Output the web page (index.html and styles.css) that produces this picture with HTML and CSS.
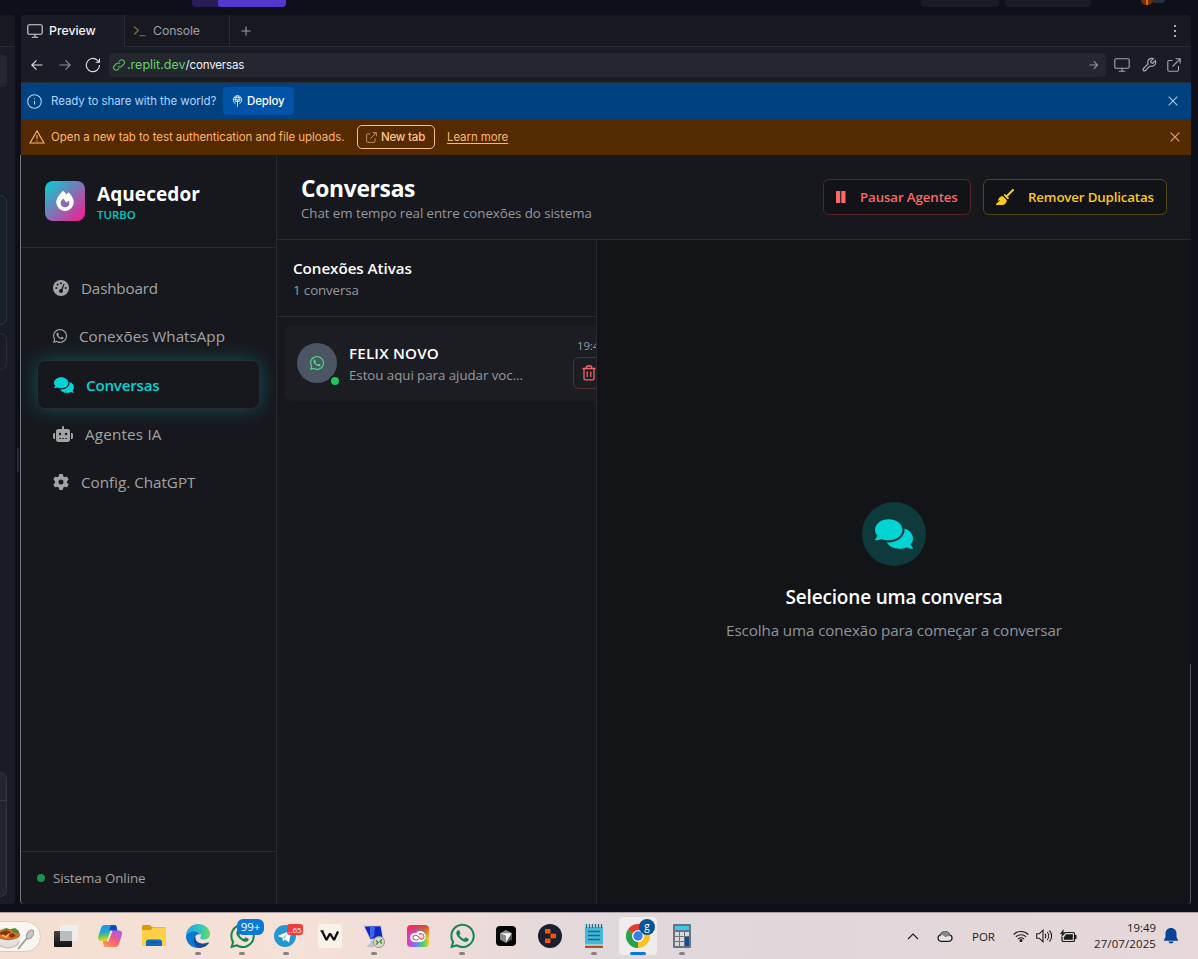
FILE: index.html
```
<!DOCTYPE html>
<html lang="pt-BR">
<head>
<meta charset="utf-8">
<title>Conversas</title>
<link rel="stylesheet" href="styles.css">
</head>
<body>
<svg class="defs" width="0" height="0" aria-hidden="true">
  <defs>
    <symbol id="comments" viewBox="0 0 576 512"><path d="M416 192c0-88.4-93.1-160-208-160S0 103.6 0 192c0 34.3 14.1 65.9 38 92-13.4 30.2-35.5 54.2-35.8 54.5-2.2 2.3-2.8 5.7-1.5 8.7S4.8 352 8 352c36.6 0 66.9-12.3 88.7-25 32.2 15.7 70.3 25 111.3 25 114.9 0 208-71.6 208-160zm122 220c23.9-26 38-57.7 38-92 0-66.9-53.5-124.2-129.3-148.1.9 6.6 1.3 13.3 1.3 20.1 0 105.9-107.7 192-240 192-10.8 0-21.3-.8-31.7-1.9C207.8 439.6 281.8 480 368 480c41 0 79.1-9.2 111.3-25 21.8 12.7 52.1 25 88.7 25 3.2 0 6.1-1.9 7.3-4.8 1.3-2.9.7-6.3-1.5-8.7-.3-.2-22.4-24.2-35.8-54.5z"/></symbol>
    <symbol id="whatsapp" viewBox="0 0 448 512"><path d="M380.9 97.1C339 55.1 283.2 32 223.9 32c-122.4 0-222 99.6-222 222 0 39.1 10.2 77.3 29.6 111L0 480l117.7-30.9c32.4 17.7 68.9 27 106.1 27h.1c122.3 0 224.1-99.6 224.1-222 0-59.3-25.2-115-67.1-157zm-157 341.6c-33.2 0-65.7-8.9-94-25.7l-6.7-4-69.8 18.3L72 359.2l-4.4-7c-18.5-29.4-28.2-63.3-28.2-98.2 0-101.7 82.8-184.5 184.6-184.5 49.3 0 95.6 19.2 130.4 54.1 34.8 34.9 56.2 81.2 56.1 130.5 0 101.8-84.9 184.6-186.6 184.6zm101.2-138.2c-5.5-2.8-32.8-16.2-37.9-18-5.1-1.9-8.8-2.8-12.5 2.8-3.7 5.6-14.3 18-17.6 21.8-3.2 3.7-6.5 4.2-12 1.4-32.6-16.3-54-29.1-75.5-66-5.7-9.8 5.7-9.1 16.3-30.3 1.8-3.7.9-6.9-.5-9.7-1.4-2.8-12.5-30.1-17.1-41.2-4.5-10.8-9.1-9.3-12.5-9.5-3.2-.2-6.9-.2-10.6-.2-3.7 0-9.7 1.4-14.8 6.9-5.1 5.6-19.4 19-19.4 46.3 0 27.3 19.9 53.7 22.6 57.4 2.8 3.7 39.1 59.7 94.8 83.8 35.2 15.2 49 16.5 66.6 13.9 10.7-1.6 32.8-13.4 37.4-26.4 4.6-13 4.6-24.1 3.2-26.4-1.3-2.5-5-3.9-10.5-6.6z"/></symbol>
    <symbol id="monitor" viewBox="0 0 16 14"><path d="M2.2.8h11.6c.8 0 1.4.6 1.4 1.4v6.6c0 .8-.6 1.4-1.4 1.4H2.200c-.8 0-1.400-.6-1.400-1.400V2.200C.8 1.400 1.400.8 2.200.8zM8 10.200v3M4.800 13.200h6.400"/></symbol>
    <symbol id="external" viewBox="0 0 14 14"><path d="M5.500 2.500H2c-.7 0-1.200.5-1.200 1.200V12c0 .7.5 1.200 1.200 1.200h8.300c.7 0 1.200-.5 1.200-1.200V8M8.500.8h4.700v4.700M13.200.8 5.500 8.500"/></symbol>
    <symbol id="close" viewBox="0 0 10 10"><path d="m.7.7 8.600 8.600m0-8.600L.7 9.300"/></symbol>
  </defs>
</svg>

<div class="desktop">
  <div class="topbar">
    <div class="usage"><span></span></div>
    <div class="top-pill first"></div>
    <div class="top-pill second"></div>
    <div class="avatars"><i class="avatar-a"></i><i class="avatar-b"></i></div>
  </div>

  <div class="workspace">
    <div class="rail">
      <div class="rail-head"></div>
      <div class="rail-chip"></div>
      <div class="rail-card tall"></div>
      <div class="rail-card short"></div>
      <div class="rail-input"><i></i></div>
    </div>
    <div class="splitter"><i></i></div>

    <div class="pane">
      <div class="tabs">
        <div class="tab active"><svg class="line" width="16" height="14"><use href="#monitor"/></svg><span class="t-preview">Preview</span></div>
        <div class="tab console"><svg class="line prompt" width="13" height="12" viewBox="0 0 13 12"><path d="m1 1.500 4.500 4L1 9.500M6.500 10.700h6"/></svg><span class="t-console">Console</span></div>
        <svg class="line plus" width="10" height="10" viewBox="0 0 10 10"><path d="M5 .5v9M.5 5h9"/></svg>
        <div class="kebab"><i></i><i></i><i></i></div>
      </div>

      <div class="address">
        <svg class="line" width="12" height="12" viewBox="0 0 12 12"><path d="M11.500 6H1m4.500-4.700L.8 6l4.700 4.700"/></svg>
        <svg class="line dim" width="12" height="12" viewBox="0 0 12 12"><path d="M.5 6H11M6.500 1.300 11.200 6l-4.700 4.700"/></svg>
        <svg class="line reload" width="16" height="16" viewBox="0 0 16 16"><path d="M14.500 8A6.600 6.600 0 1 1 12.300 3.100l2 1.900M14.500 1.500v3.800h-3.800"/></svg>
        <div class="url">
          <svg class="line link" width="12" height="12" viewBox="0 0 12 12"><path d="M5 7.200a2.500 2.500 0 0 0 3.600.1l2-2A2.500 2.500 0 0 0 7 1.600l-1.100 1.100M7 4.800a2.500 2.500 0 0 0-3.600-.1l-2 2A2.500 2.500 0 0 0 5 10.400l1.100-1.100"/></svg>
          <span class="host">.replit.dev</span><span class="path">/conversas</span>
          <svg class="line go" width="9" height="10" viewBox="0 0 9 10"><path d="M.5 5h8M4.800 1.200 8.500 5 4.800 8.800"/></svg>
        </div>
        <div class="tools">
          <svg class="line" width="16" height="14"><use href="#monitor"/></svg>
          <svg class="line wrench" width="16" height="16" viewBox="0 0 24 24"><path d="M14.700 6.300a1 1 0 0 0 0 1.400l1.600 1.600a1 1 0 0 0 1.400 0l3.800-3.800a6 6 0 0 1-7.900 7.900l-6.900 6.900a2.100 2.100 0 0 1-3-3l6.900-6.900a6 6 0 0 1 7.900-7.900z"/></svg>
          <svg class="line" width="14" height="14"><use href="#external"/></svg>
        </div>
      </div>

      <div class="notice share">
        <svg class="line" width="15" height="15" viewBox="0 0 15 15"><circle cx="7.500" cy="7.500" r="6.800"/><path d="M7.500 7v3.500M7.500 4.300v1"/></svg>
        <span class="t-share">Ready to share with the world?</span>
        <div class="deploy"><svg class="line" width="11" height="12" viewBox="0 0 11 12"><path d="M3.500 8.600A4.200 4.200 0 1 1 7.500 8.600M1.300 4.800h8.400M2 2.700h7M5.500.6C3.500 2 3.300 5 4 7M5.500.6C7.500 2 7.700 5 7 7M5.500 5.500v6.300M4 7.200 5.500 5.500 7 7.200"/></svg><span>Deploy</span></div>
        <svg class="line x" width="10" height="10"><use href="#close"/></svg>
      </div>
      <div class="notice warn">
        <svg class="line" width="16" height="14" viewBox="0 0 16 14"><path d="M8 .9 15 13H1zM8 5v4M8 10.300v1.100"/></svg>
        <span class="t-open">Open a new tab to test authentication and file uploads.</span>
        <div class="newtab"><svg class="line" width="11" height="11"><use href="#external"/></svg><span>New tab</span></div>
        <span class="learn">Learn more</span>
        <svg class="line x" width="10" height="10"><use href="#close"/></svg>
      </div>

      <div class="app">
        <aside class="sidebar">
          <div class="brand">
            <div class="logo"><svg width="18" height="20" viewBox="0 0 448 512"><path fill="#fff" d="M159.300 5.400c7.800-7.300 19.900-7.200 27.700 .1c27.600 25.900 53.500 53.800 77.700 84c11-14.400 23.500-30.100 37-42.900c7.900-7.400 20.100-7.400 28 .1c34.600 33 63.900 76.600 84.500 118c20.300 40.800 33.800 82.500 33.800 111.900C448 404.200 348.200 512 224 512C98.400 512 0 404.100 0 276.500c0-38.400 17.800-85.300 45.400-131.700C73.300 97.700 112.700 48.600 159.300 5.400zM225.700 416c25.300 0 47.700-7 68.800-21c42.100-29.400 53.400-88.200 28.100-134.400c-4.500-9-16-9.600-22.500-2l-25.200 29.300c-6.600 7.600-18.500 7.400-24.700-.5c-16.500-21-46-58.500-62.800-79.800c-6.300-8-18.300-8.100-24.700-.1c-33.800 42.500-50.800 69.300-50.800 99.400C112 375.400 162.600 416 225.700 416z"/></svg></div>
            <div class="brand-text"><strong>Aquecedor</strong><small>TURBO</small></div>
          </div>
          <nav>
            <a class="item"><svg width="16" height="16" viewBox="0 0 16 16"><circle cx="8" cy="8" r="8"/><g fill="#17181d"><circle cx="3.300" cy="8" r="1.050"/><circle cx="4.700" cy="4.600" r="1.050"/><circle cx="8" cy="3.200" r="1.050"/><circle cx="12.700" cy="8" r="1.050"/><circle cx="8" cy="11.100" r="2"/><path d="m7.600 10.700 3-7 1 .4-2.600 7.200z"/></g></svg><span class="n1">Dashboard</span></a>
            <a class="item"><svg width="14" height="16"><use href="#whatsapp"/></svg><span class="n2">Conexões WhatsApp</span></a>
            <a class="item current"><svg width="20" height="18"><use href="#comments"/></svg><span class="n3">Conversas</span></a>
            <a class="item"><svg width="20" height="16" viewBox="0 0 640 512"><path d="M320 0c17.700 0 32 14.300 32 32V96H472c39.800 0 72 32.200 72 72V440c0 39.800-32.200 72-72 72H168c-39.800 0-72-32.200-72-72V168c0-39.800 32.200-72 72-72H288V32c0-17.700 14.300-32 32-32zM208 384c-8.800 0-16 7.200-16 16s7.200 16 16 16h32c8.800 0 16-7.200 16-16s-7.200-16-16-16H208zm96 0c-8.800 0-16 7.200-16 16s7.200 16 16 16h32c8.800 0 16-7.200 16-16s-7.200-16-16-16H304zm96 0c-8.800 0-16 7.200-16 16s7.200 16 16 16h32c8.800 0 16-7.200 16-16s-7.200-16-16-16H400zM264 256a40 40 0 1 0-80 0 40 40 0 1 0 80 0zm152 40a40 40 0 1 0 0-80 40 40 0 1 0 0 80zM48 224H64V416H48c-26.500 0-48-21.500-48-48V272c0-26.500 21.500-48 48-48zm544 0c26.500 0 48 21.500 48 48v96c0 26.500-21.500 48-48 48H576V224h16z"/></svg><span class="n4">Agentes IA</span></a>
            <a class="item"><svg width="16" height="16" viewBox="0 0 512 512"><path d="M495.900 166.600c3.200 8.700 .5 18.400-6.400 24.600l-43.300 39.400c1.100 8.300 1.700 16.800 1.700 25.400s-.6 17.100-1.700 25.400l43.300 39.400c6.900 6.200 9.600 15.900 6.400 24.600c-4.400 11.900-9.700 23.300-15.800 34.300l-4.700 8.100c-6.600 11-14 21.400-22.100 31.200c-5.900 7.200-15.700 9.600-24.500 6.800l-55.700-17.700c-13.400 10.300-28.200 18.900-44 25.400l-12.500 57.100c-2 9.100-9 16.300-18.200 17.800c-13.800 2.300-28 3.500-42.500 3.500s-28.700-1.200-42.500-3.500c-9.200-1.500-16.200-8.700-18.200-17.800l-12.500-57.100c-15.800-6.500-30.600-15.100-44-25.400L83.100 425.900c-8.800 2.800-18.600 .3-24.500-6.800c-8.100-9.800-15.500-20.200-22.100-31.200l-4.700-8.100c-6.100-11-11.400-22.400-15.800-34.300c-3.200-8.700-.5-18.400 6.400-24.600l43.300-39.400C64.600 273.100 64 264.600 64 256s.6-17.100 1.700-25.400L22.400 191.200c-6.900-6.200-9.600-15.900-6.400-24.600c4.400-11.900 9.700-23.300 15.800-34.300l4.700-8.100c6.600-11 14-21.400 22.100-31.200c5.900-7.200 15.700-9.600 24.500-6.800l55.700 17.700c13.400-10.300 28.200-18.900 44-25.400l12.500-57.100c2-9.100 9-16.300 18.200-17.800C227.300 1.200 241.500 0 256 0s28.700 1.200 42.500 3.500c9.200 1.500 16.200 8.700 18.200 17.800l12.500 57.100c15.800 6.500 30.600 15.100 44 25.400l55.700-17.700c8.800-2.800 18.600-.3 24.500 6.800c8.100 9.800 15.500 20.200 22.100 31.200l4.700 8.100c6.100 11 11.400 22.400 15.800 34.300zM256 336a80 80 0 1 0 0-160 80 80 0 1 0 0 160z"/></svg><span class="n5">Config. ChatGPT</span></a>
          </nav>
          <div class="status"><i></i><span>Sistema Online</span></div>
        </aside>

        <main>
          <header class="page-head">
            <div class="titles"><h1>Conversas</h1><p>Chat em tempo real entre conexões do sistema</p></div>
            <div class="btn red"><svg width="10" height="12" viewBox="0 0 10 12"><rect width="4.200" height="12" rx=".6"/><rect x="5.300" width="4.200" height="12" rx=".6"/></svg><span>Pausar Agentes</span></div>
            <div class="btn yellow"><svg width="18" height="16" viewBox="0 0 576 512"><path d="M566.600 54.600c12.500-12.500 12.500-32.800 0-45.300s-32.800-12.500-45.300 0l-192 192-34.700-34.700c-4.200-4.200-10-6.600-16-6.600c-12.500 0-22.600 10.100-22.600 22.600v29.100L364.300 320h29.100c12.500 0 22.600-10.100 22.600-22.600c0-6-2.400-11.800-6.600-16l-34.700-34.700 192-192zM341.100 353.400L222.600 234.900c-42.700-3.700-85.200 11.700-115.800 42.300l-8 8C76.500 307.500 64 337.700 64 369.200c0 6.800 7.100 11.200 13.200 8.200l51.100-25.500c5-2.500 9.500 4.100 5.400 7.900L7.300 473.400C2.700 477.600 0 483.600 0 489.900C0 502.100 9.900 512 22.100 512l173.300 0c38.800 0 75.900-15.400 103.400-42.800c30.600-30.600 45.900-73.100 42.300-115.800z"/></svg><span>Remover Duplicatas</span></div>
          </header>
          <div class="columns">
            <section class="list">
              <div class="list-head"><h2>Conexões Ativas</h2><p>1 conversa</p></div>
              <div class="row">
                <div class="face"><svg width="14" height="16"><use href="#whatsapp"/></svg><i></i></div>
                <div class="who"><strong>FELIX NOVO</strong><p>Estou aqui para ajudar voc...</p></div>
                <div class="meta"><time>19:49</time><div class="trash"><svg class="line" width="14" height="16" viewBox="0 0 14 16"><path d="M.5 3.500h13M4.300 3.300V2c0-.6.4-1 1-1h3.400c.6 0 1 .4 1 1v1.300M2 3.800v9.700c0 .8.600 1.400 1.400 1.400h7.200c.8 0 1.400-.6 1.400-1.400V3.800M5.300 6.500v5.500M8.700 6.500v5.500"/></svg></div></div>
              </div>
            </section>
            <section class="empty">
              <div class="orb"><svg width="38" height="34"><use href="#comments"/></svg></div>
              <h3>Selecione uma conversa</h3>
              <p>Escolha uma conexão para começar a conversar</p>
            </section>
          </div>
        </main>
      </div>
    </div>
  </div>

  <div class="taskbar">
    <div class="search">
      <svg width="36" height="24" viewBox="0 0 36 24"><ellipse cx="8" cy="16" rx="11.500" ry="6.500" fill="#c9c5c1"/><path d="M-4 9c0 8 5 12 12 12s12-4 12-12z" fill="#e5e1dd"/><ellipse cx="8" cy="8.500" rx="12" ry="5.800" fill="#b96a3f"/><ellipse cx="8" cy="8.500" rx="10.500" ry="4.700" fill="#dd7226"/><path d="m-1 7 7-3 5 2-7 5zM8 9l5-2 3 3-5 2z" fill="#8f2d11"/><path d="m11 3 4-1 4 3-2 3-4-2zM3 3l4-1 2 2-4 1z" fill="#4f8a34"/><path d="m2 9 4 2 3-3" stroke="#f2c55a" stroke-width="1.500" fill="none"/><path d="m18 23 9-11" stroke="#9b9b9c" stroke-width="1.800"/><ellipse cx="30" cy="8.500" rx="3" ry="5" transform="rotate(32 30 8.500)" fill="#c5c6c8" stroke="#8e8e90"/></svg>
    </div>
    <div class="slot"><svg width="24" height="24" viewBox="0 0 24 24"><defs><linearGradient id="dk" x2="0" y2="1"><stop stop-color="#444"/><stop offset="1" stop-color="#101010"/></linearGradient></defs><rect x="0" y="7" width="18" height="16" rx="1" fill="url(#dk)"/><rect x="6" y="1" width="18" height="16" rx="1" fill="#eee"/><path d="M6 7h12v10H6z" fill="#bcbcbc"/></svg></div>
    <div class="slot"><svg width="24" height="22" viewBox="0 0 24 22"><defs><linearGradient id="c1" x2=".2" y2="1"><stop stop-color="#1793ee"/><stop offset=".5" stop-color="#23a8cc"/><stop offset=".75" stop-color="#7dc74a"/><stop offset="1" stop-color="#f1cf22"/></linearGradient><linearGradient id="c2" x2=".2" y2="1" x1=".8"><stop stop-color="#a25cf5"/><stop offset=".5" stop-color="#f4587c"/><stop offset="1" stop-color="#ff9659"/></linearGradient></defs><path d="M6.500 0h10c1.500 0 2 1 2.500 3h-3c-1.500 0-2.500.7-3 2.200L10 14c-.5 1.500-1.200 2-2.700 2H3c-2.500 0-3.400-2-2.700-4.500L3 3c.6-2 1.800-3 3.500-3z" fill="url(#c1)"/><path d="M13 .1h3.500C18 0 18.600 1 19.500 6H13.200L11 5z" fill="#1648c6"/><path d="M17.500 22h-10C6 22 5.500 21 5 16h3c1.500 0 2.500-.7 3-2.200L13.200 8c.5-1.500 1.300-2.500 2.800-2.500h5c2.500 0 3.400 2 2.700 5L21 19c-.6 2-1.800 3-3.500 3z" fill="url(#c2)"/><path d="M12.500 5.500h2L10.500 16.500H9z" fill="#f4e1d8"/></svg></div>
    <div class="slot"><svg width="24" height="22" viewBox="0 0 24 22"><path d="M0 1.500C0 .7.700 0 1.500 0h6C9 0 9 2 10.500 2H22c1 0 2 .7 2 1.700V8H0z" fill="#dc9a0b"/><path d="M0 6.500V5h8.500L11 2.500h11.500c.8 0 1.500.7 1.500 1.500v17H0z" fill="#ffd045"/><path d="M4 21v-4c0-1.500 1-2.500 2.500-2.500h11c1.500 0 2.500 1 2.500 2.500v4z" fill="#0b6dc2"/><path d="M8 17.500h8" stroke="#074f96"/></svg></div>
    <div class="slot run"><svg width="24" height="24" viewBox="0 0 24 24"><defs><linearGradient id="e1"><stop stop-color="#1fa5e3"/><stop offset=".6" stop-color="#34c5c1"/><stop offset="1" stop-color="#67dd55"/></linearGradient></defs><path d="M0 12C0 5 5.500 0 12 0c7 0 12 4.500 12 9.500 0 4-3 6-6 6-3.500 0-4.500-1.200-3.300-2.700C16 11 14 8 9.500 8 5 8 1 10 0 12z" fill="url(#e1)"/><path d="M0 12c2-5 12-6.500 14.500-1.500C11 9.500 8.500 12 9.500 15c1 4 6 6.500 12.500 3.600C20 22 16.500 24 12 24 5 24 0 18.500 0 12z" fill="#0a78d0"/><path d="M9.300 12.500c-1 4.500 4.700 9.500 12.900 6.100.8-.2 1 .3.500 1-2 2.700-5.500 4.400-9 4.400C8 22.500 6 16 9.300 12.500z" fill="#154b91"/></svg></div>
    <div class="slot run"><svg class="wa" width="25" height="28"><use href="#whatsapp"/></svg><b class="badge blue">99+</b></div>
    <div class="slot run"><svg width="24" height="24" viewBox="0 0 24 24"><circle cx="11" cy="12" r="11" fill="#2497d0"/><path d="m3.500 12 14-6-2.500 12.500-4-3-2 2-.5-3.700z" fill="#fff"/><path d="m8.500 13.800 6-5.300-4.200 6.500z" fill="#a9cfe4"/></svg><b class="badge red">..65</b></div>
    <div class="slot"><svg width="24" height="24" viewBox="0 0 24 24"><rect width="24" height="24" rx="2" fill="#f8f2e9"/><path d="m4 7 4.500 9 3.500-6.500 4 6.500 4-8.500" fill="none" stroke="#111" stroke-width="2.300" stroke-linejoin="bevel"/><path d="M2.500 7h3" stroke="#111" stroke-width="1.500"/></svg></div>
    <div class="slot run"><svg width="24" height="24" viewBox="0 0 24 24"><path d="m1 1.500 19-.5 2 13-14 2.500z" fill="#d2d5db"/><path d="m2.500 2.500 16-.3 2 11L8.500 15z" fill="#1727bd"/><path d="m8 2.500 5-.1-1 10-4 2z" fill="#3e63ee"/><path d="m9 17 5-1v4l-3 3.500-7-1 4-3z" fill="#bfc3ca"/><circle cx="17" cy="18" r="5.500" fill="#d9d9d3" stroke="#949493"/><path d="m14 16.500 2 2-2 2m6-5-2 2 2 2" fill="none" stroke="#3e8a2d" stroke-width="1.400"/></svg></div>
    <div class="slot"><div class="cc"><svg width="17" height="13" viewBox="0 0 17 13"><path d="M5 12a4.500 4.500 0 1 1 .8-8.800A5.500 5.500 0 1 1 11 12z" fill="#fff"/><path d="M8.500 9.200C7 10.500 3 10.500 3 7.700 3 5 6.500 4.500 8 6.300l2 2.200c2 1.500 4-.2 4-2 0-2.500-3-3.800-5-2" fill="none" stroke="#f2405f" stroke-width="1.100"/></svg></div></div>
    <div class="slot run"><svg class="wa" width="25" height="28"><use href="#whatsapp"/></svg></div>
    <div class="slot"><svg width="20" height="20" viewBox="0 0 20 20"><rect width="20" height="20" rx="4" fill="#050505"/><path d="m4 7.200 6-3.200 6 3.200L10 10z" fill="#8d8d8d"/><path d="M16 7.200 10 17v-7L4 7.200z" fill="#f4f4f4"/><path d="M4 7.200 10 10v7l-6-3.500z" fill="#8a8a8a"/><path d="M16 7.200v6.300L10 17z" fill="#555"/></svg></div>
    <div class="slot"><svg width="24" height="24" viewBox="0 0 24 24"><circle cx="12" cy="12" r="12" fill="#172130"/><path d="M7 5h5.500v4.500H7zM12.500 9.700H18v4.600h-5.500zM7 14.500h5.500V19H7z" fill="#f9560b"/></svg></div>
    <div class="slot run"><svg width="18" height="24" viewBox="0 0 18 24"><path d="M0 21h18v3H0z" fill="#b5521a"/><path d="M0 3h18v18.500H0z" fill="#45b8d8"/><path d="M1.500 0v4m3-4v4m3-4v4m3-4v4m3-4v4m3-4v4" stroke="#19738f" stroke-width="1.300"/><path d="M3 7.500h12M3 11.500h12M3 15.500h12" stroke="#146b86" stroke-width="1.300"/><path d="M0 20.500h18v1H0z" fill="#f2eee8"/></svg></div>
    <div class="slot chrome"><svg width="24" height="24" viewBox="0 0 24 24"><path d="M12 12 1.600 6A12 12 0 0 1 22.400 6z" fill="#e33b2e"/><path d="M12 12 22.400 6A12 12 0 0 1 12 24z" fill="#fcc31e"/><path d="M12 12v12A12 12 0 0 1 1.600 6z" fill="#2c9f4b"/><path d="M12 6.200h10.500A12 12 0 0 1 24 12l-7 3z" fill="#fcc31e"/><path d="M1.600 6 7 15l5 3.500L9 23.600z" fill="#2c9f4b"/><circle cx="12" cy="12" r="6" fill="#fff"/><circle cx="12" cy="12" r="4.700" fill="#397ee8"/></svg><b class="badge user">g</b></div>
    <div class="slot run"><svg width="18" height="24" viewBox="0 0 18 24"><rect width="18" height="24" rx="1" fill="#69747f"/><path d="M2 2h14v4H2z" fill="#39c9ee"/><path d="M2 8h4v4H2zm5 0h4v4H7zm5 0h4v4h-4zM2 13h4v4H2zm5 0h4v4H7zM2 18h4v4H2zm5 0h4v4H7z" fill="#d5d9dc"/><path d="M12 13h4v9h-4z" fill="#0b4c98"/></svg></div>
    <div class="tray">
      <svg class="line chev" width="12" height="7" viewBox="0 0 12 7"><path d="m1 6 5-5 5 5"/></svg>
      <svg class="cloud" width="16" height="12" viewBox="0 0 16 12"><path d="M4 11.300a3.300 3.300 0 0 1-.4-6.500 4.700 4.700 0 0 1 8.900 0A3.300 3.300 0 0 1 12 11.300z" fill="#e9e5e6" stroke="#1c1c1c" stroke-width="1.200"/><path d="M2 5.800C4 4.500 6 5 8.500 7.200L13 5.500C11 0 5 0 3.600 4.800z" fill="#898788"/></svg>
      <span class="lang">POR</span>
      <svg class="line wifi" width="16" height="12" viewBox="0 0 16 12"><path d="M.7 4.500a10.300 10.300 0 0 1 14.600 0M2.800 6.900a7.300 7.300 0 0 1 10.400 0M5 9.100a4.300 4.300 0 0 1 6 0"/><circle cx="8" cy="10.500" r="1" fill="#1c1c1c"/></svg>
      <svg class="line vol" width="17" height="14" viewBox="0 0 17 14"><path d="M.7 4.800h2.500L7 1.200v11.600L3.200 9.200H.7zM9 4.800c1 1.300 1 3.100 0 4.400M11.200 3c2 2.300 2 5.700 0 8M13.400 1.300c3 3.300 3 8.100 0 11.400"/></svg>
      <svg class="bat" width="17" height="14" viewBox="0 0 17 14"><path d="M4.500 3.500h8.700c.8 0 1.300.5 1.300 1.300v6.400c0 .8-.5 1.300-1.300 1.300H3.300c-.8 0-1.300-.5-1.300-1.300V8" fill="none" stroke="#1c1c1c" stroke-width="1.200"/><path d="M6 5.200h6.800v5.600H3.800V8.500zM15 6h1.500v4H15zM3.500 0 0 5h2L1 8.500 6 3.500H3.500z" fill="#1c1c1c"/></svg>
      <div class="clock"><span class="hm">19:49</span><span class="dt">27/07/2025</span></div>
      <svg class="bell" width="14" height="16" viewBox="0 0 14 16"><path d="M7 0c3.200 0 5.500 2.400 5.500 5.500V9L14 12v.7H0V12l1.500-3V5.500C1.500 2.400 3.800 0 7 0zM4.500 13.500h5A2.500 2 0 0 1 4.500 13.500z" fill="#074496"/></svg>
    </div>
  </div>
</div>
</body>
</html>
```
FILE: styles.css
```
* { box-sizing: border-box; }
body { margin: 0; width: 1198px; height: 959px; overflow: hidden; background: #0e0f18; font-family: "Open Sans", "Noto Sans", sans-serif; }
h1, h2, h3, p { margin: 0; }
svg { display: block; flex: none; fill: currentColor; }
.defs { position: absolute; }
.line { fill: none; stroke: currentColor; stroke-width: 1.100; }
span, time, strong, small { white-space: nowrap; }
.desktop { display: flex; flex-direction: column; height: 959px; }

/* top strip */
.topbar { height: 15px; flex: none; display: flex; align-items: flex-start; padding-left: 192px; }
.usage { width: 94px; height: 7px; background: #291d58; border-radius: 0 0 4px 4px; overflow: hidden; }
.usage span { display: block; margin-left: 26px; height: 7px; background: #5438ce; border-radius: 0 0 0 3px; }
.top-pill { height: 7px; background: #1a1c25; border-radius: 0 0 4px 4px; }
.top-pill.first { margin-left: 635px; width: 78px; }
.top-pill.second { margin-left: 6px; width: 86px; }
.avatars { margin-left: 50px; display: flex; }
.avatar-a { width: 12px; height: 5px; background: linear-gradient(90deg, #6b3200 5px, #ff5a10 5px, #ff5a10 7px, #6b3200 7px); border-radius: 0 0 7px 7px; }
.avatar-b { width: 12px; height: 3px; background: #2b2e3b; border-radius: 0 0 9px 3px; }

/* workspace */
.workspace { height: 889px; flex: none; display: flex; }
.rail { width: 15px; background: #1a1c25; border-radius: 0 4px 4px 0; overflow: hidden; }
.rail-head { height: 32px; background: #181920; border-bottom: 1px solid #292b36; }
.rail-chip { margin-top: 8px; width: 7px; height: 32px; background: #252730; border-radius: 0 4px 4px 0; }
.rail-card { width: 7px; border: 1px solid #2a2c38; border-left: 0; border-radius: 0 7px 7px 0; }
.rail-card.tall { margin-top: 108px; height: 130px; border-color: #27343a; background: #1a2028; }
.rail-card.short { margin-top: 8px; height: 37px; }
.rail-input { margin-top: 402px; width: 7px; height: 125px; background: #22242e; border: 1px solid #343642; border-left: 0; border-radius: 0 7px 7px 0; }
.rail-input i { display: block; height: 28px; border-bottom: 1px solid #343642; }
.splitter { width: 6px; padding: 433px 0 0 2px; }
.splitter i { display: block; width: 2px; height: 24px; background: #272936; }
.pane { width: 1170px; display: flex; flex-direction: column; background: #1a1c25; border-radius: 4px; font-family: Inter, sans-serif; }

.tabs { height: 32px; display: flex; align-items: center; background: #181920; border-bottom: 1px solid #292b36; border-radius: 4px 4px 0 0; }
.tab { height: 31px; display: flex; align-items: center; border-right: 1px solid #292b36; color: #9ea0a8; }
.tab.active { width: 104px; height: 32px; align-self: flex-start; padding: 0 0 1px 6px; gap: 6px; background: #1a1c25; color: #f4f4f6; border-radius: 4px 0 0 0; }
.tab.active svg { color: #d6d7dd; }
.tab.console { width: 105px; padding-left: 8px; gap: 7px; }
.prompt { color: #837548; }
.t-preview { font-size: 12.300px; font-weight: 500; }
.t-console { font-size: 12.300px; letter-spacing: -.1px; }
.plus { margin-left: 11px; color: #9ea0a8; }
.kebab { margin: 0 15px 0 auto; display: grid; gap: 3px; }
.kebab i { width: 2px; height: 2px; background: #a8aab3; }

.address { height: 36px; flex: none; display: flex; align-items: center; padding-left: 10px; border-bottom: 1px solid #2b2d36; color: #e0e1e5; }
.address .dim { margin-left: 16px; color: #8c8e98; }
.reload { margin-left: 14px; }
.url { margin-left: 8px; width: 997px; height: 24px; display: flex; align-items: center; padding: 0 8px 0 4px; background: #242630; border-radius: 4px; }
.link { color: #58c85f; margin-right: 2px; }
.host { font-size: 12.500px; color: #62d36c; }
.path { font-size: 11.600px; letter-spacing: -.2px; color: #eef0f3; }
.go { margin-left: auto; color: #92949d; }
.tools { margin-left: 8px; display: flex; align-items: center; gap: 10.500px; color: #a6a8b1; }
.wrench { stroke-width: 1.800; }

.notice { height: 36px; flex: none; display: flex; align-items: center; font-size: 11.500px; }
.notice .x { margin-left: auto; }
.share { padding: 0 13px 0 6px; background: #00417f; color: #aed6ff; }
.t-share { margin-left: 9px; width: 166px; letter-spacing: -.07px; }
.deploy { margin-left: 6px; width: 71px; height: 28px; display: flex; align-items: center; gap: 4px; padding-left: 9px; background: #0053a6; border-radius: 4px; color: #fff; font-weight: 500; letter-spacing: -.15px; }
.deploy svg { stroke-width: .8; }
.share .x { color: #a7cbee; }
.warn { padding: 0 11px 0 8px; background: #542b00; color: #ffb56b; }
.t-open { margin-left: 6px; width: 294px; letter-spacing: -.05px; }
.newtab { margin-left: 12px; width: 78px; height: 24px; display: flex; align-items: center; gap: 4px; padding-left: 8px; border: 1px solid #ffbd7a; border-radius: 5px; color: #ffc78f; font-weight: 500; letter-spacing: -.2px; }
.newtab svg { color: #d99d64; }
.learn { margin-left: 12px; letter-spacing: -.1px; text-decoration: underline; text-underline-offset: 2px; }
.warn .x { color: #e8a76a; }

/* application */
.app { position: relative; flex: 1; display: flex; min-height: 0; margin-left: -1px; border-left: 1px solid #77777b; border-bottom-left-radius: 4px; background: #17181d; font-family: "Open Sans", "Noto Sans", sans-serif; }
.app::after { content: ""; position: absolute; right: 0; bottom: 0; width: 5px; height: 240px; border-right: 1px solid #55565b; border-bottom-right-radius: 4px; }
.sidebar { width: 256px; display: flex; flex-direction: column; border-right: 1px solid #282a32; }
.brand { height: 93px; flex: none; display: flex; align-items: center; gap: 12px; padding: 0 24px; border-bottom: 1px solid #282a32; }
.logo { width: 40px; height: 40px; display: grid; place-items: center; border-radius: 8px; background: linear-gradient(135deg, #00d4d4, #ff1493); }
.brand-text { display: flex; flex-direction: column; padding-top: 2px; }
.brand-text strong { font-size: 19px; line-height: 26px; color: #fff; letter-spacing: .08px; }
.brand-text small { font-size: 11.400px; line-height: 16px; font-weight: 600; color: #00c9c2; }
nav { padding: 16px; flex: 1; }
.item { display: flex; align-items: center; height: 48px; padding: 0 16px; color: #a3a3a3; font-size: 15.200px; }
.item span { margin-left: 12px; }
.item.current { width: 223px; height: 49px; margin-bottom: 1px; border: 1px solid #292b32; border-radius: 8px; background: #17181d; color: #00d4d4; font-weight: 600; box-shadow: 0 0 20px rgba(0, 212, 212, .3); }
.n1 { letter-spacing: -.16px; }
.n3 { letter-spacing: -.24px; }
.n4 { letter-spacing: .2px; }
.status { height: 53px; display: flex; align-items: center; gap: 8px; padding-left: 16px; border-top: 1px solid #282a32; font-size: 13.300px; letter-spacing: -.05px; color: #a3a3a3; }
.status i { width: 8px; height: 8px; border-radius: 50%; background: #1f914a; }

main { flex: 1; min-width: 0; display: flex; flex-direction: column; }
.page-head { height: 85px; flex: none; display: flex; align-items: center; padding: 0 24px; border-bottom: 1px solid #282a32; }
.titles { margin-right: auto; padding-top: 3px; }
h1 { font-size: 22.800px; line-height: 29px; letter-spacing: -.3px; color: #fff; }
.titles p { font-size: 13.300px; line-height: 20px; letter-spacing: -.05px; color: #96999f; }
.btn { height: 36px; display: flex; align-items: center; background: #121316; border: 1px solid; border-radius: 6px; font-size: 13.300px; font-weight: 600; }
.btn.red { width: 148px; padding-left: 12px; border-color: #58242a; color: #f76b6b; letter-spacing: -.12px; }
.btn.red span { margin-left: 14px; }
.btn.yellow { width: 184px; margin-left: 12px; padding-left: 12px; border-color: #554714; color: #fbca19; letter-spacing: -.15px; }
.btn.yellow span { margin-left: 14px; }

.columns { flex: 1; display: flex; min-height: 0; }
.list { width: 320px; flex: none; border-right: 1px solid #282a32; overflow: hidden; }
.list-head { height: 77px; padding: 16px; border-bottom: 1px solid #282a32; }
h2 { font-size: 15.200px; line-height: 24px; font-weight: 600; letter-spacing: -.05px; color: #fff; }
.list-head p { font-size: 13.300px; line-height: 20px; letter-spacing: -.1px; color: #96999f; }
.row { margin: 8px 0 0 8px; width: 340px; height: 76px; display: flex; align-items: center; padding-left: 12px; background: #1c1d22; border-radius: 8px; }
.face { position: relative; width: 40px; height: 40px; display: grid; place-items: center; border-radius: 50%; background: #4b5563; color: #4ade80; }
.face i { position: absolute; right: -4px; bottom: -4px; width: 12px; height: 12px; border: 2px solid #17221f; border-radius: 50%; background: #22c55e; }
.who { margin-left: 12px; width: 224px; }
.who strong { display: block; font-size: 15.200px; line-height: 24px; font-weight: 600; letter-spacing: .18px; color: #fff; }
.who p { font-size: 13.300px; line-height: 20px; letter-spacing: -.04px; color: #96999f; }
.meta { width: 40px; }
.meta time { display: block; margin-left: 4px; font-size: 11.400px; line-height: 16px; letter-spacing: -.1px; color: #96999f; }
.trash { margin-top: 3px; width: 34px; height: 32px; display: flex; align-items: center; padding-left: 8px; border: 1px solid #5d2c31; border-radius: 6px; color: #f06767; }
.trash svg { stroke-width: 1.300; }

.empty { flex: 1; display: flex; flex-direction: column; align-items: center; padding-top: 262px; background: #131417; }
.orb { width: 64px; height: 64px; display: grid; place-items: center; border-radius: 50%; background: #0f3a3b; color: #00d4d4; }
h3 { margin-top: 17px; font-size: 19px; line-height: 28px; font-weight: 600; letter-spacing: -.17px; color: #fff; }
.empty p { margin-top: 7px; font-size: 15.200px; line-height: 24px; letter-spacing: -.11px; color: #90959b; }

/* taskbar */
.taskbar { margin-top: 8px; height: 47px; display: flex; border-top: 1px solid #aaa2a2; background: linear-gradient(90deg, #f4dfd2 0, #f4e1d8 300px, #f0dcd8 430px, #dfd8dc 620px, #e2d7da 900px, #e7d7d9 1198px); }
.search { width: 42px; height: 31px; margin: 8px 3px 0 -1px; padding-top: 4px; background: #fbf5ef; border: 1px solid #d9cbc2; border-radius: 0 16px 16px 0; }
.slot { position: relative; width: 44px; height: 46px; flex: none; display: grid; place-items: center; }
.slot.run::after { content: ""; position: absolute; bottom: 4px; left: 19px; width: 6px; height: 3px; border-radius: 2px; background: #8c817d; }
.wa { color: #14874f; }
.badge { position: absolute; color: #fff; font-weight: 400; text-align: center; }
.badge.blue { left: 17px; top: 6px; width: 27px; height: 16px; border-radius: 6px; background: #0879d8; font-size: 11.500px; line-height: 16px; }
.badge.red { left: 23px; top: 11px; width: 16px; height: 11px; border-radius: 3px; background: #f33c3c; font-size: 8px; line-height: 11px; }
.badge.user { left: 23px; top: 6px; width: 16px; height: 16px; border-radius: 50%; background: #075596; font-size: 10px; line-height: 14px; }
.chrome::before { content: ""; position: absolute; left: 3px; top: 4px; width: 38px; height: 38px; border-radius: 4px; background: #f1ecec; }
.chrome::after { content: ""; position: absolute; bottom: 4px; left: 14px; width: 16px; height: 3px; border-radius: 2px; background: #0879d8; }
.chrome svg { position: relative; }
.cc { width: 22px; height: 22px; display: grid; place-items: center; border-radius: 4px; background: linear-gradient(180deg, rgba(255, 40, 50, .9), transparent 60%), linear-gradient(90deg, #f22cc0, #5e8bff 45%, #46d85a 75%, #ffc928); }
.tray { margin-left: auto; width: 291px; display: flex; align-items: center; color: #1c1c1c; }
.cloud { margin-left: 18px; }
.lang { margin: 1px 0 0 19px; width: 23px; font-size: 11.500px; }
.wifi { margin-left: 18px; }
.vol { margin-left: 7px; }
.bat { margin-left: 7px; }
.clock { margin-left: 7px; width: 72px; display: flex; flex-direction: column; align-items: flex-end; font-size: 11.400px; line-height: 16px; }
.dt { letter-spacing: .15px; }
.bell { margin-left: 8px; }
```
